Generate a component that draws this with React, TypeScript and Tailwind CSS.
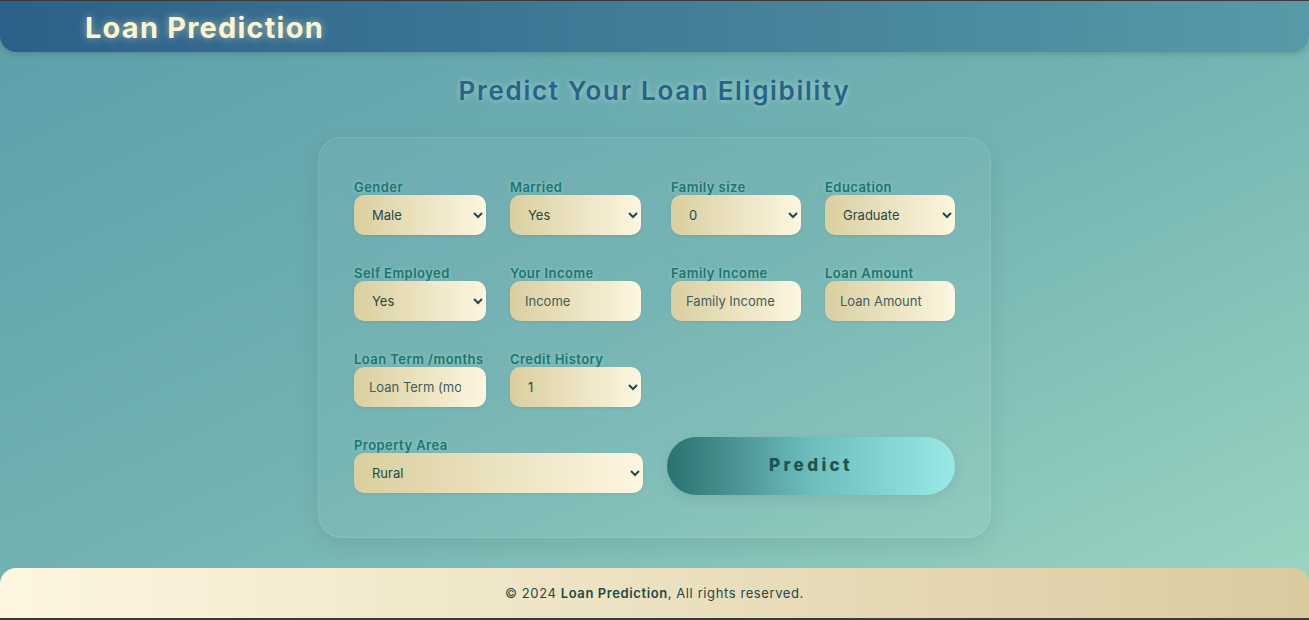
import React from "react";

const labelCls =
  "block text-[13px] font-semibold leading-4 tracking-[0.45px] text-[#1b7670] [text-shadow:0_0_4px_rgba(200,240,220,0.5)]";
const fieldCls =
  "block w-full h-10 rounded-[10px] bg-gradient-to-r from-[#dacf9f] to-[#fdf6e1] pl-[14px] pr-[14px] text-[13px] text-[#1f4a48] outline-none border-0 shadow-[0_1px_3px_rgba(0,0,0,0.08)]";
const inputCls = fieldCls + " pl-[15px] pr-[25px] placeholder:text-[#3f5e5a]";

function SelectField({ label, options }: { label: string; options: string[] }) {
  return (
    <div className="flex flex-col">
      <label className={labelCls}>{label}</label>
      <select className={fieldCls}>
        {options.map((o) => (
          <option key={o}>{o}</option>
        ))}
      </select>
    </div>
  );
}

function InputField({ label, placeholder }: { label: string; placeholder: string }) {
  return (
    <div className="flex flex-col">
      <label className={labelCls}>{label}</label>
      <input className={inputCls} placeholder={placeholder} />
    </div>
  );
}

const leftHalf = "grid grid-cols-[132px_131px] gap-x-6";
const rightHalf = "grid grid-cols-[130px_130px] gap-x-6";

export default function App() {
  return (
    <div
      className="w-[1309px] h-[620px] flex flex-col overflow-hidden bg-gradient-to-br from-[#5c9fab] via-[#73b3b2] to-[#9dd6c2] border-t border-t-[#3a3a3a] border-b-2 border-b-[#3a3a3a]"
      style={{ fontFamily: "Inter, 'Noto Sans', sans-serif" }}
    >
      <header className="h-[51px] shrink-0 rounded-b-[16px] bg-gradient-to-r from-[#2c6088] to-[#589aa8] flex items-center pl-[85px] shadow-[0_2px_6px_rgba(0,0,0,0.15)]">
        <h1 className="text-[29px] leading-9 font-bold tracking-[1.2px] text-[#fbf5d2] [text-shadow:0_0_8px_rgba(255,245,200,0.55)] translate-y-[1px]">
          Loan Prediction
        </h1>
      </header>

      <main className="flex-1 flex flex-col items-center pt-[23px]">
        <h2 className="h-8 leading-8 text-[26px] font-semibold tracking-[1.7px] text-[#2a6387] [text-shadow:0_0_6px_rgba(200,240,235,0.6)]">
          Predict Your Loan Eligibility
        </h2>

        <div className="mt-[30px] w-[673px] h-[401px] rounded-[24px] border border-[rgba(255,255,255,0.1)] bg-[rgba(255,255,255,0.035)] shadow-[0_8px_24px_rgba(0,0,0,0.08)] pt-[41px] pl-[35px]">
          <div className="grid grid-cols-[287px_284px] gap-x-[30px] gap-y-[30px]">
            <div className={leftHalf}>
              <SelectField label="Gender" options={["Male", "Female"]} />
              <SelectField label="Married" options={["Yes", "No"]} />
            </div>
            <div className={rightHalf}>
              <SelectField label="Family size" options={["0", "1", "2", "3+"]} />
              <SelectField label="Education" options={["Graduate", "Not Graduate"]} />
            </div>

            <div className={leftHalf}>
              <SelectField label="Self Employed" options={["Yes", "No"]} />
              <InputField label="Your Income" placeholder="Income" />
            </div>
            <div className={rightHalf}>
              <InputField label="Family Income" placeholder="Family Income" />
              <InputField label="Loan Amount" placeholder="Loan Amount" />
            </div>

            <div className={leftHalf}>
              <InputField label="Loan Term /months" placeholder="Loan Term (months)" />
              <SelectField label="Credit History" options={["1", "0"]} />
            </div>
            <div />

            <div className="-mr-[2px]">
              <SelectField label="Property Area" options={["Rural", "Semiurban", "Urban"]} />
            </div>
            <div className="-ml-[4px]">
              <button className="w-[288px] h-[58px] rounded-full bg-gradient-to-r from-[#2a7270] via-[#6dbdbd] to-[#9ae9e9] text-[17px] font-extrabold tracking-[3.4px] text-[#1d5351] shadow-[0_4px_14px_rgba(0,0,0,0.08)]">
                Predict
              </button>
            </div>
          </div>
        </div>
      </main>

      <footer className="h-[50px] shrink-0 mt-[30px] rounded-t-[16px] bg-gradient-to-r from-[#fdf6e1] to-[#dacb9f] flex items-center justify-center">
        <p className="text-[13px] tracking-[0.6px] text-[#1d4a48] translate-y-[1px]">
          © 2024 <span className="font-semibold">Loan Prediction</span>, All rights reserved.
        </p>
      </footer>
    </div>
  );
}
